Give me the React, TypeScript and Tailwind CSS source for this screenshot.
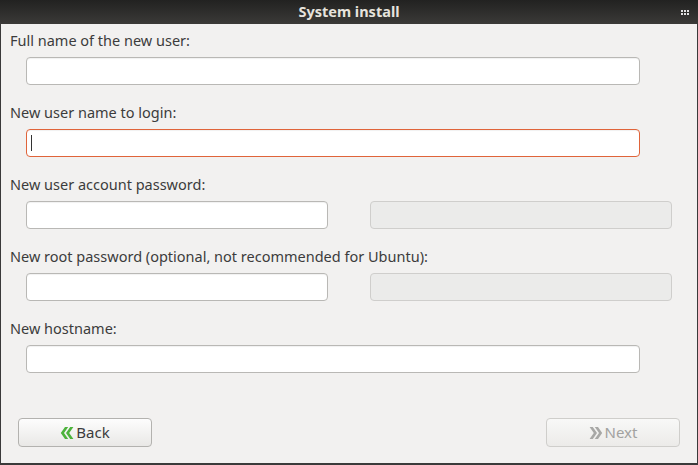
import React from 'react'

const font = { fontFamily: '"Noto Sans", "DejaVu Sans", sans-serif' }

function Field({ className = '', focused = false, disabled = false }: { className?: string; focused?: boolean; disabled?: boolean }) {
  const tone = disabled
    ? 'bg-[#ebebea] border-[#cfcecc]'
    : focused
      ? 'bg-white border-[#e0643a] shadow-[inset_0_1px_1px_rgba(0,0,0,0.06)]'
      : 'bg-white border-[#b9b8b5] shadow-[inset_0_1px_1px_rgba(0,0,0,0.06)]'
  return (
    <div className={`h-[28px] rounded-[4px] border flex items-center ${tone} ${className}`}>
      {focused && <div className="ml-[4px] w-px h-[16px] bg-[#333]" />}
    </div>
  )
}

function Label({ children }: { children: React.ReactNode }) {
  return <div className="h-[32px] pl-[9px] flex items-center text-[14.5px] text-[#3c3c3c] leading-none">{children}</div>
}

// bold double chevron, like the Ubuntu button glyph
function Chevrons({ color, right = false }: { color: string; right?: boolean }) {
  return (
    <svg width="14" height="14" viewBox="0 0 14 14" className={`mr-[2px] ${right ? '-scale-x-100' : ''}`}>
      <path d="M5 1 L0.8 7 L5 13 H8.2 L4 7 L8.2 1 Z" fill={color} />
      <path d="M10.2 1 L6 7 L10.2 13 H13.4 L9.2 7 L13.4 1 Z" fill={color} />
    </svg>
  )
}

export default function App() {
  return (
    <div className="w-[698px] h-[465px] bg-[#3a3a3a] flex flex-col" style={font}>
      <div className="h-[24px] bg-gradient-to-b from-[#222221] to-[#3b3a38] relative flex items-center justify-center">
        <span className="text-[14.5px] font-bold text-[#e6e3dd]">System install</span>
        <div className="absolute right-[9px] top-[10px] grid grid-cols-3 gap-[1px]">
          {Array.from({ length: 6 }).map((_, i) => (
            <div key={i} className="w-[2px] h-[2px] bg-[#e0e0e0]" />
          ))}
        </div>
      </div>
      <div className="flex-1 mx-px mb-[2px] bg-[#f2f1f0] flex flex-col">
        <Label>Full name of the new user:</Label>
        <div className="h-[40px] pt-px pl-[25px]">
          <Field className="w-[614px]" />
        </div>
        <Label>New user name to login:</Label>
        <div className="h-[40px] pt-px pl-[25px]">
          <Field className="w-[614px]" focused />
        </div>
        <Label>New user account password:</Label>
        <div className="h-[40px] pt-px pl-[25px] flex gap-[42px]">
          <Field className="w-[302px]" />
          <Field className="w-[302px]" disabled />
        </div>
        <Label>New root password (optional, not recommended for Ubuntu):</Label>
        <div className="h-[40px] pt-px pl-[25px] flex gap-[42px]">
          <Field className="w-[302px]" />
          <Field className="w-[302px]" disabled />
        </div>
        <Label>New hostname:</Label>
        <div className="h-[40px] pt-px pl-[25px]">
          <Field className="w-[614px]" />
        </div>
        <div className="mt-auto mb-[16px] px-[17px] flex justify-between">
          <button className="w-[134px] h-[29px] rounded-[4px] border border-[#b3b2af] bg-gradient-to-b from-[#fdfdfd] to-[#e9e8e6] flex items-center justify-center text-[15px] text-[#3c3c3c]">
            <Chevrons color="#4cb33c" />
            Back
          </button>
          <button className="w-[134px] h-[29px] rounded-[4px] border border-[#cfcecb] bg-gradient-to-b from-[#f8f8f7] to-[#ecebe9] flex items-center justify-center text-[15px] text-[#a2a2a0]">
            <Chevrons color="#a8a8a6" right />
            Next
          </button>
        </div>
      </div>
    </div>
  )
}
